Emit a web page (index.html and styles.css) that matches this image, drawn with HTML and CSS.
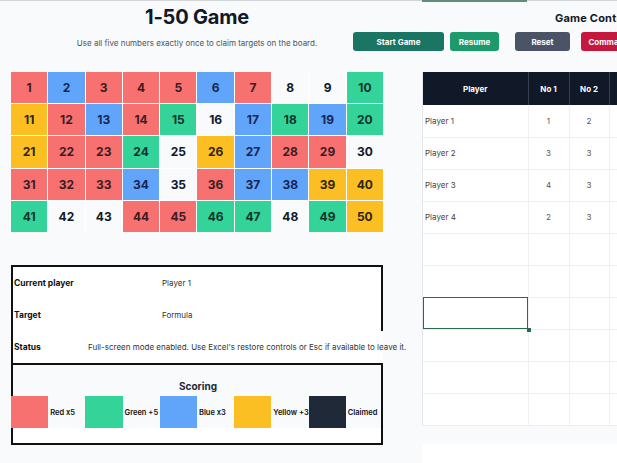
FILE: index.html
```html
<!DOCTYPE html>
<html lang="en">
<head>
<meta charset="utf-8">
<title>1-50 Game</title>
<link rel="stylesheet" href="styles.css">
</head>
<body>
<div class="topline"><span class="tl-a"></span><span class="tl-b"></span><span class="tl-c"></span></div>
<header class="header">
  <div class="titleblock">
    <h1 class="title">1-50 Game</h1>
    <p class="subtitle">Use all five numbers exactly once to claim targets on the board.</p>
  </div>
  <div class="controls">
    <div class="ctrl-title">Game Controls</div>
    <div class="buttons">
      <button class="btn btn-start">Start Game</button>
      <button class="btn btn-resume">Resume</button>
      <button class="btn btn-reset">Reset</button>
      <button class="btn btn-command">Command</button>
    </div>
  </div>
</header>
<main class="main">
  <section class="left">
    <div class="board">
      <div class="cell r">1</div><div class="cell b">2</div><div class="cell r">3</div><div class="cell r">4</div><div class="cell r">5</div><div class="cell b">6</div><div class="cell r">7</div><div class="cell w">8</div><div class="cell w">9</div><div class="cell g">10</div>
      <div class="cell y">11</div><div class="cell r">12</div><div class="cell b">13</div><div class="cell r">14</div><div class="cell g">15</div><div class="cell w">16</div><div class="cell b">17</div><div class="cell g">18</div><div class="cell b">19</div><div class="cell g">20</div>
      <div class="cell y">21</div><div class="cell r">22</div><div class="cell r">23</div><div class="cell g">24</div><div class="cell w">25</div><div class="cell y">26</div><div class="cell b">27</div><div class="cell r">28</div><div class="cell r">29</div><div class="cell w">30</div>
      <div class="cell r">31</div><div class="cell r">32</div><div class="cell r">33</div><div class="cell b">34</div><div class="cell w">35</div><div class="cell r">36</div><div class="cell b">37</div><div class="cell b">38</div><div class="cell y">39</div><div class="cell y">40</div>
      <div class="cell g">41</div><div class="cell w">42</div><div class="cell w">43</div><div class="cell r">44</div><div class="cell r">45</div><div class="cell g">46</div><div class="cell g">47</div><div class="cell w">48</div><div class="cell g">49</div><div class="cell y">50</div>
    </div>
    <div class="info">
      <div class="irow boxed"><span class="ilabel">Current player</span><span class="ival val-e">Player 1</span></div>
      <div class="irow boxed"><span class="ilabel">Target</span><span class="ival val-e">Formula</span></div>
      <div class="irow"><span class="ilabel lbl-short">Status</span><span class="ival">Full-screen mode enabled. Use Excel's restore controls or Esc if available to leave it.</span></div>
    </div>
    <div class="scoring">
      <div class="sc-title">Scoring</div>
      <div class="sc-row">
        <div class="sw sw-r"></div><div class="sl">Red x5</div>
        <div class="sw sw-g"></div><div class="sl">Green +5</div>
        <div class="sw sw-b"></div><div class="sl">Blue x3</div>
        <div class="sw sw-y"></div><div class="sl">Yellow +3</div>
        <div class="sw sw-k"></div><div class="sl">Claimed</div>
      </div>
      <div class="sc-foot"></div>
    </div>
  </section>
  <section class="right">
    <div class="sheet">
      <table class="players">
        <thead>
          <tr><th class="c-player">Player</th><th class="c-no">No 1</th><th class="c-no2">No 2</th><th class="c-rest"></th></tr>
        </thead>
        <tbody>
          <tr><td class="name">Player 1</td><td>1</td><td>2</td><td></td></tr>
          <tr><td class="name">Player 2</td><td>3</td><td>3</td><td></td></tr>
          <tr><td class="name">Player 3</td><td>4</td><td>3</td><td></td></tr>
          <tr><td class="name">Player 4</td><td>2</td><td>3</td><td></td></tr>
          <tr><td></td><td></td><td></td><td></td></tr>
          <tr><td></td><td></td><td></td><td></td></tr>
          <tr><td class="selected"><span class="handle"></span></td><td></td><td></td><td></td></tr>
          <tr><td></td><td></td><td></td><td></td></tr>
          <tr><td></td><td></td><td></td><td></td></tr>
          <tr><td></td><td></td><td></td><td></td></tr>
        </tbody>
      </table>
    </div>
    <div class="below"></div>
  </section>
</main>
</body>
</html>
```

FILE: styles.css
```css
* { box-sizing: border-box; }
html, body { margin: 0; padding: 0; }
body {
  width: 617px;
  height: 463px;
  overflow: hidden;
  background: #f8fafc;
  font-family: Inter, "Noto Sans", "Liberation Sans", sans-serif;
  color: #1f2937;
}

.topline { display: flex; height: 2px; align-items: flex-start; }
.tl-a { width: 422px; height: 1px; background: #d2d5d8; }
.tl-b { width: 105px; height: 2px; background: #5f8f79; }
.tl-c { flex: 1; height: 1px; background: #d2d5d8; }

.header { display: flex; height: 70px; white-space: nowrap; }
.titleblock { width: 372px; margin-left: 11px; text-align: center; padding-top: 3px; flex: none; }
.title { margin: 0; font-size: 20px; line-height: 24px; font-weight: 700; color: #111827; letter-spacing: -0.2px; }
.subtitle { margin: 8px 0 0; font-size: 8px; line-height: 12px; color: #4b5563; }

.controls { margin-left: -30px; flex: none; }
.ctrl-title { margin-left: 202px; padding-top: 9px; font-size: 11px; line-height: 14px; font-weight: 700; color: #111827; letter-spacing: 0.2px; }
.buttons { display: flex; margin-top: 7px; }
.btn {
  height: 19px; border: 0; border-radius: 3px; color: #fff;
  font-family: inherit; font-size: 8px; font-weight: 700; padding: 0;
  display: flex; align-items: center; justify-content: center;
}
.btn-start { width: 91px; background: #1a7563; }
.btn-resume { width: 49px; margin-left: 6px; background: #1d9a6c; }
.btn-reset { width: 55px; margin-left: 16px; background: #4a5466; }
.btn-command { width: 55px; margin-left: 11px; background: #c8173f; }

.main { display: flex; }
.left { width: 422px; padding-left: 11px; flex: none; }

.board {
  display: grid;
  grid-template-columns: repeat(10, 1fr);
  grid-template-rows: repeat(5, 1fr);
  gap: 1px;
  width: 372px; height: 160px;
  background: #ffffff;
}
.cell {
  display: flex; align-items: center; justify-content: center;
  font-size: 12px; font-weight: 700; color: #1f2433;
}
.cell.r { background: #f87171; color: #3a1d22; }
.cell.b { background: #60a5fa; color: #172554; }
.cell.g { background: #34d399; color: #12332a; }
.cell.y { background: #fbbf24; color: #2d2412; }
.cell.w { background: #f8fafc; color: #111827; }

.info {
  margin-top: 33px; width: 372px;
  border-top: 2px solid #111; border-left: 2px solid #111;
  background: #fff; font-size: 8px; color: #222;
}
.irow { height: 32px; display: flex; align-items: center; white-space: nowrap; }
.irow.boxed { border-right: 2px solid #111; }
.ilabel { width: 149px; padding-left: 1px; font-weight: 700; color: #111; flex: none; font-size: 8.5px; }
.ilabel.lbl-short { width: 75px; }
.ival { color: #333; }

.scoring {
  width: 372px; height: 82px;
  border: 2px solid #111;
  background: #f8fafc;
  display: flex; flex-direction: column;
}
.sc-title { height: 31px; display: flex; align-items: flex-end; justify-content: center; font-size: 10px; font-weight: 700; color: #1f2937; padding-bottom: 4px; padding-left: 2px; }
.sc-row { display: grid; grid-template-columns: repeat(10, 37.2px); height: 32px; margin-left: -2px; }
.sw-r { background: #f87171; }
.sw-g { background: #34d399; }
.sw-b { background: #60a5fa; }
.sw-y { background: #fbbf24; }
.sw-k { background: #1f2937; }
.sl { display: flex; align-items: center; padding-left: 2px; font-size: 7.5px; font-weight: 600; color: #111; white-space: nowrap; }
.sc-foot { flex: 1; background: #fff; }

.right { flex: 1; min-width: 0; }
.sheet { border-left: 1px solid #e3e6ea; width: 220px; }
.players { border-collapse: collapse; table-layout: fixed; width: 220px; font-size: 8px; }
.players th {
  height: 33px; background: #111827; color: #fff; font-weight: 700;
  border-right: 1px solid #3a4252; padding: 0; text-align: center;
}
.c-player { width: 105px; }
.c-no { width: 41px; }
.c-no2 { width: 40px; }
.c-rest { width: 34px; }
.players td {
  height: 32px; padding: 0; background: #fff; color: #555;
  border-right: 1px solid #eef0f3; border-bottom: 1px solid #eceef1;
  text-align: center;
}
.players td.name { text-align: left; padding-left: 2px; color: #444; }
.players td.selected { position: relative; outline: 1.5px solid #2c6a4e; outline-offset: -1px; }
.handle { position: absolute; right: -3px; bottom: -3px; width: 4px; height: 4px; background: #2c6a4e; }
.below { margin-top: 18px; height: 40px; background: #fff; }
```
